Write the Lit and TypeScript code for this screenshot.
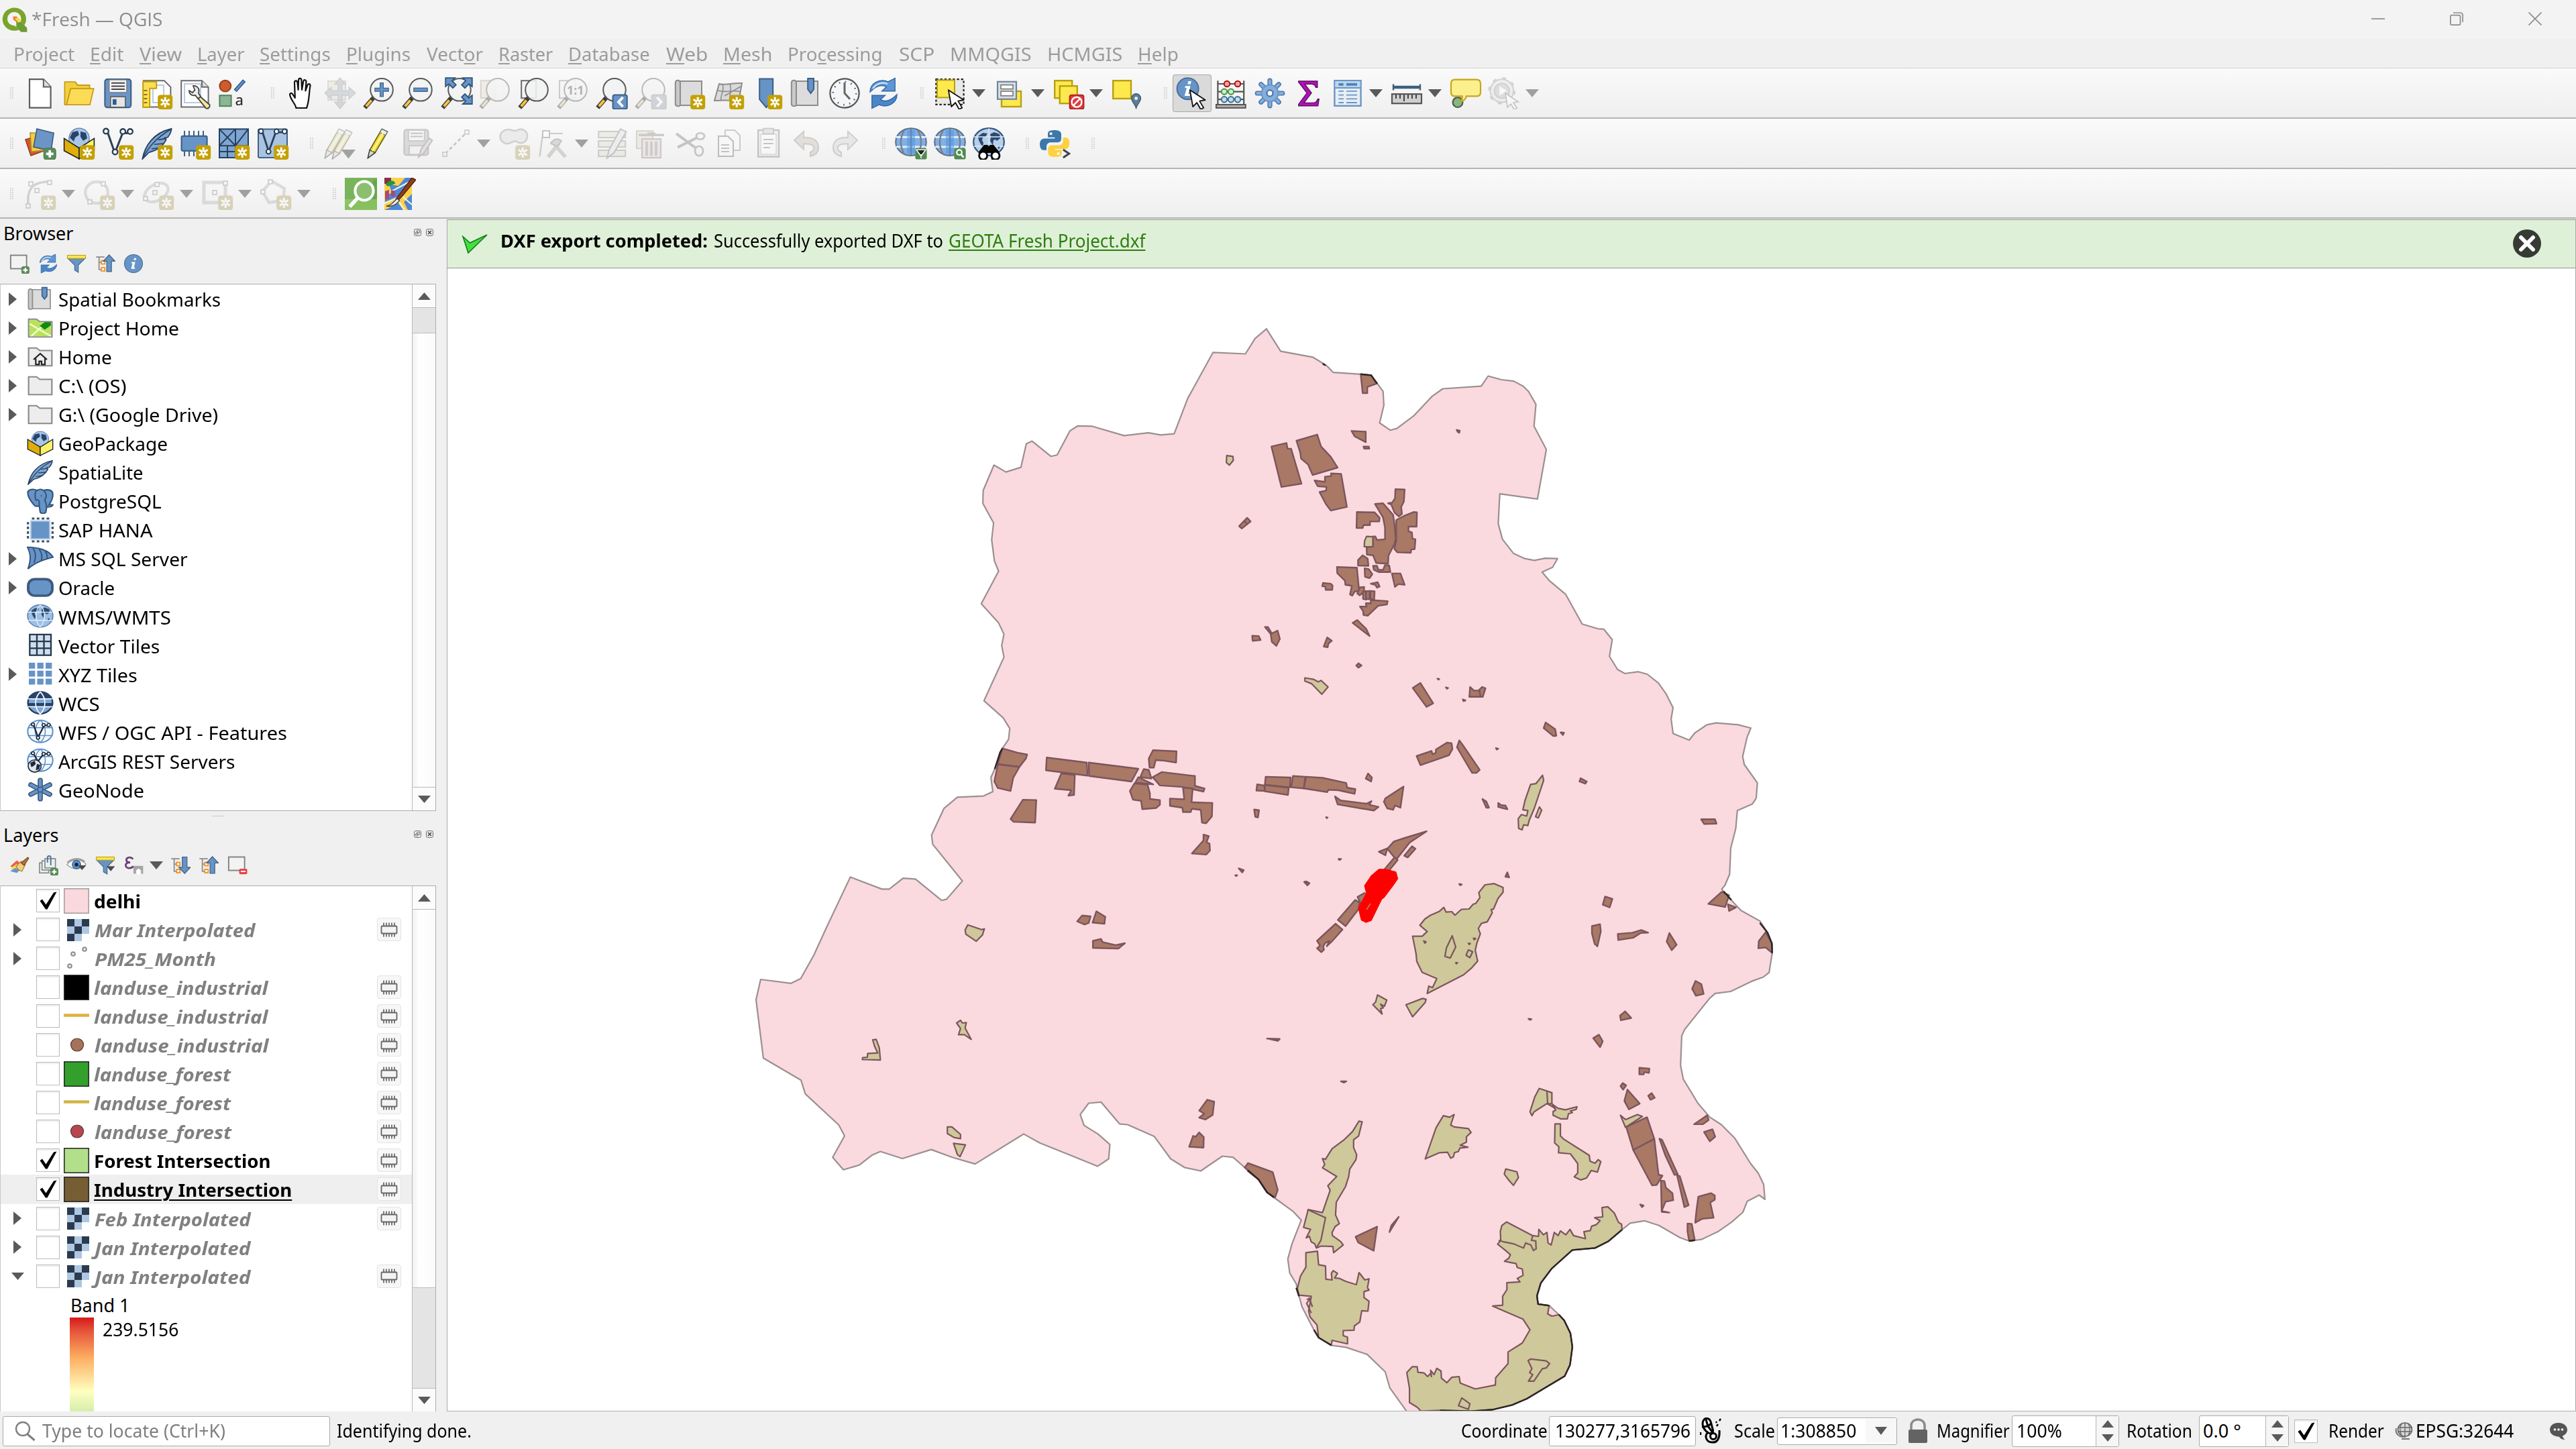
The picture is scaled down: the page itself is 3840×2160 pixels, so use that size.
import { LitElement, html, svg, css, nothing } from "lit";
import { customElement, property } from "lit/decorators.js";
import { styleMap } from "lit/directives/style-map.js";

/* ---------- shared icon parts (24 x 24 grid) ---------- */
const star = svg`<rect x="12.6" y="13.2" width="11" height="10.8" rx="2" fill="#c4a000"/><path d="M18.1 14.9v7.6M14.9 16.6l6.4 4.2M21.3 16.6l-6.4 4.2" stroke="#fff" stroke-width="1.5"/><circle cx="18.1" cy="18.7" r="1.5" fill="#fff"/><circle cx="18.1" cy="18.7" r=".7" fill="#c4a000"/>`;
const plusBadge = svg`<rect x="14.6" y="15.4" width="9" height="8.6" rx="2" fill="#5a8c5a" stroke="#457545" stroke-width=".5"/><path d="M19.1 17v5.4M16.4 19.7h5.4" stroke="#fff" stroke-width="1.8"/>`;
const lens = (inner: unknown = nothing) => svg`<path d="M1.4 22.8l6.6-7.6" stroke="#3c3c3c" stroke-width="3.2"/><path d="M2.4 21.7l3.900-4.500" stroke="#fcc33c" stroke-width="1.9"/><circle cx="14" cy="9.400" r="8.400" fill="#f1f3f3" fill-opacity=".88" stroke="#5a5a5a" stroke-width="1"/>${inner}`;
const pointer = svg`<path d="M10.400 9.600l11.400 7.400-4.200.8 3 5-2.200 1.200-2.800-5-3 3z" fill="#fff" stroke="#111" stroke-width=".9" stroke-linejoin="round"/>`;
const pencil = svg`<path d="M4.200 22.800l1.400-6L14.600 1.200l4.200 2L9.600 18.800z" fill="#f2dd3b" stroke="#6b6410" stroke-width=".9" stroke-linejoin="round"/><path d="M5.600 16.800l4 2-5.400 4z" fill="#d8d8d8" stroke="#444" stroke-width=".7"/><path d="M14.600 1.200l4.200 2-1.500 2.600-4.200-2z" fill="#eee" stroke="#777" stroke-width=".6"/><path d="M7.600 17.600l8-13.400" stroke="#fff6a0" stroke-width="1.100"/>`;
const globeBase = svg`<ellipse cx="12" cy="10.800" rx="11.400" ry="10.200" fill="#7fb0e6" stroke="#5a6f88" stroke-width="1"/><path d="M1 7.200h22M1 14.400h22" stroke="#e9f1fa" stroke-width="1.400"/><path d="M7 2c-3.400 6-3.400 12 0 18M17 2c3.400 6 3.400 12 0 18M12 .8v20" stroke="#7a7f86" stroke-width="1.200" fill="none"/><path d="M9 2.200h6v17.200H9z" fill="#4c91e0" opacity=".5"/>`;
const continents = svg`<path d="M4 6.500l3.500-2.500 3.500.5-1.500 2.500-2 .5-.5 2 1 2-.6 3-1.700-2.500-1.200-2.500zM13 5l3-1.500 4 1.500.6 3-2.600 2-1-1-1.500.5-.5 4-2-3.500.5-3zM18.500 14l2-.5-1 3z" fill="#2c4a70"/>`;
const folder = svg`<path d="M1.600 3.600h7l3 2.400h10.800v14.400H1.600z" fill="#ededed" stroke="#8a8a8a" stroke-width="1.300"/>`;
const refresh = svg`<path d="M2 11C2 4.600 9 .8 15.400 3.400L20.600.8v9.600H10.800l3.400-3.200C10.200 5 6 7 2 11z" fill="#5f97d4" stroke="#2f66a8" stroke-width=".7"/><path d="M22 13c0 6.400-7 10.200-13.400 7.600L3.400 23.200v-9.600h9.800l-3.400 3.200C13.800 19 18 17 22 13z" fill="#4b86c8" stroke="#2f66a8" stroke-width=".7"/><path d="M4 8.600C7 4.600 11 3.600 15 5" stroke="#cfe2f6" stroke-width="1.100" fill="none"/>`;
const info = svg`<circle cx="12" cy="12" r="10.800" fill="#6794c6" stroke="#4a7099" stroke-width=".9"/><path d="M12.800 5.300h2.400l-.5 2.400h-2.400zM9.800 10h4.300l-1.700 6.600h1.500l-.4 1.600H9.200l1.700-6.600H9.400z" fill="#fff"/>`;
const treeLines = svg`<path d="M1 4h10M4.500 4v15.500M4.500 10.500H9M4.500 19H9" stroke="#8a8a8a" stroke-width="1.400" fill="none"/><rect x="7.400" y="8.400" width="4" height="4" fill="#fff" stroke="#f39324" stroke-width="1.500"/><rect x="7.400" y="16.800" width="4" height="4" fill="#fff" stroke="#f39324" stroke-width="1.500"/>`;
const funnel = svg`<path d="M1.500 5.500h21l-8.300 8.300v8.600l-4.400-2.600v-6z" fill="#6794c6" stroke="#41678f" stroke-width=".9"/><rect x="1.200" y="2" width="21.600" height="3.800" fill="#fbe64a" stroke="#b79f12" stroke-width=".8"/>`;
const scroll = svg`<path d="M5 3h16v18H5z" fill="#dcdcdc" stroke="#8d8d8d"/><path d="M1.400 4.500C1.400 1.600 5 1.600 5 4.500V20.500c0 1.600-3.600 1.600-3.600-.6z" fill="#c9c9c9" stroke="#8d8d8d"/>`;
const quill = svg`<path d="M1.200 23.400C3 14 9 4 22.800 1c-.2 3-1.600 4.800-2.800 6.400l-2.200.4 1 1.400c-2.600 5.200-7 8-12.800 9.400z" fill="#7ea5d3" stroke="#26405f" stroke-width=".9"/><path d="M1.200 23.400C6 14 12 7.400 22 1.600M8 16l6-1M10 12.600l7-.6M13 9.200l6-1" stroke="#26405f" stroke-width=".8" fill="none"/>`;
const vnet = svg`<path d="M4.200 3.600L9.600 19 15.400 4.200h4" stroke="#2c4056" stroke-width="1.500" fill="none"/><g fill="#fff" stroke="#2c4056" stroke-width="1.200"><circle cx="3" cy="2.800" r="1.900"/><circle cx="9.800" cy="18.200" r="1.900"/><circle cx="15.600" cy="3" r="1.900"/><circle cx="21" cy="3" r="1.900"/></g>`;
const box = svg`<circle cx="12" cy="8.200" r="7.600" fill="#a9c6e8" stroke="#5a7da6" stroke-width=".6"/><path d="M7 3.500l4-1 1 3-3 2-1 3-3-3zM13 3l4 1 1 4-3 2-2-3z" fill="#27456b"/><path d="M.8 8.200L12 15.400v8L.8 17.400z" fill="#dfae08" stroke="#222" stroke-width=".8"/><path d="M23.200 8.200L12 15.400v8l11.200-6z" fill="#fdf36a" stroke="#222" stroke-width=".8"/>`;
const node = (x: number, y: number) => svg`<rect x=${x - 1.5} y=${y - 1.5} width="3" height="3" fill="#f4f4f4" stroke="#8a9296" stroke-width=".9"/>`;

const ICONS: Record<string, unknown> = {
  qgis: svg`<path fill-rule="evenodd" d="M11.500 1a10.500 10.800 0 1 0 0 21.600c1.700 0 3-.3 4.400-1L12 17.800c-4 0-6.600-2.600-6.600-6.200C5.400 7.800 8 5 11.500 5s6.200 2.800 6.200 6.600c0 .9-.1 1.600-.4 2.400l3.400 3.200c1-1.600 1.500-3.600 1.500-5.600C22.200 5.500 17.500 1 11.500 1z" fill="#7aa52c"/><path d="M10.600 9.200h3l2.600 2.600v3l-2 .2-3.600-3z" fill="#f0782a"/><path d="M13.400 13l2.600-1 7 8v3.800h-5.400l-4.200-4.600z" fill="#6f9b35"/><path d="M12 11l3-1 3 4-3 1z" fill="#f6d64a"/>`,
  newdoc: svg`<path d="M4 1.600h10.400l5.400 5.600V22.800H4z" fill="#fff" stroke="#5d5d5d" stroke-width="1.100"/><path d="M14.400 1.600v5.600h5.400" fill="#ddd" stroke="#5d5d5d"/>`,
  open: svg`<path d="M1.200 3.600h8l1.600 2.400h9v3H6L3 20.600H1.200z" fill="#f2cf3d" stroke="#c89b16" stroke-width=".9"/><path d="M5.600 8.600H22.800L20 20.600H2.600z" fill="#fcdc56" stroke="#c89b16" stroke-width=".9"/>`,
  save: svg`<rect x="2.200" y="1.600" width="19.400" height="21" rx="1.800" fill="#6c95c5" stroke="#3f6289" stroke-width="1.100"/><rect x="5.400" y="2" width="13" height="9.400" fill="#f4f4f4" stroke="#777" stroke-width=".6"/><path d="M7 4.400h10M7 6.700h10M7 9h10" stroke="#444" stroke-width="1"/><rect x="6.400" y="14.600" width="11" height="7.800" fill="#e5e5e5" stroke="#555" stroke-width=".7"/><rect x="8" y="16.400" width="2.800" height="4.200" fill="#2e5b94"/>`,
  layout: svg`<path d="M2 2.600h15.400l4.800 4.800v14.800H2z" fill="#fff" stroke="#6b6b6b"/><path d="M9 6h8v13H9z" fill="none" stroke="#b9cbe6"/><path d="M1.600 3.400h10v5h-5v14h-5z" fill="#fbdf58" stroke="#c4a000"/><path d="M2.200 10h2.500M2.200 13h2.500M2.200 16h2.500M2.200 19h2.500" stroke="#8d7608"/>${star}`,
  wrench: svg`<path d="M1.600 2.600H17l4.800 4.800v14.800H1.600z" fill="#fff" stroke="#6b6b6b"/><path d="M17 2.600v4.800h4.800" fill="#ddd" stroke="#6b6b6b"/><path d="M4 5h12v14H4z" fill="none" stroke="#b9cbe6"/><path d="M14 13l8.800 7.600c.3 2-1.200 3.200-2.800 2.600L13 14.500z" fill="#f4e39c" stroke="#444" stroke-width=".9"/><path d="M10.500 6.500c2.600-.2 4.600 1.600 4.300 4l-.3 1.500 1.600 2.500-2 1.500-2-2.500c-2.600.6-4.600-.8-4.600-3.400l2.600 1.400 1.600-2z" fill="#ececec" stroke="#444" stroke-width=".9"/>`,
  style: svg`<circle cx="5.400" cy="6.600" r="4.200" fill="#cf5a2c" stroke="#96401e"/><path d="M12.800 10.200l6.800-7.600" stroke="#2e5a94" stroke-width="2.800"/><path d="M13.200 9.800l6-6.800" stroke="#6c95c5" stroke-width="1.200"/><rect x="1.200" y="13.600" width="8.600" height="8" fill="#8bb594" stroke="#4f8658"/><text x="12.800" y="21" font-size="11" font-family="Noto Sans" fill="#222">a</text>`,
  hand: svg`<path d="M8.200 23c-.4-3-3.800-5.600-4.600-9.600-.4-1.600 1.400-2 2.200-.4l1.600 2.400L7 4c0-1.800 2-1.800 2.200 0l.6 5.400.2-7.200c.2-1.800 2.200-1.600 2.200.2l.3 7 1.100-6.200c.4-1.700 2.200-1.300 2.100.4l-.5 6.600 1.500-4.200c.6-1.500 2.300-.9 2 .7-1 5.300-.6 11.300-2.700 16.300z" fill="#fff" stroke="#111" stroke-width="1.100" stroke-linejoin="round"/>`,
  panto: svg`<rect x="3" y="3" width="13" height="14" fill="#e9dfae" stroke="#bbb08a"/><path d="M12 .6l4 4.600h-2.600v5H18.600V7.600l4.800 4.200-4.800 4.400v-2.600h-5.200v5H16l-4 4.800-4-4.800h2.600v-5H5.400v2.600L.6 11.800l4.800-4.200v2.600h5.200v-5H8z" fill="#9aaec0" stroke="#8896a3" stroke-width=".8"/>`,
  zoomin: lens(svg`<path d="M14 4v10.800M8.600 9.400h10.800" stroke="#3f6289" stroke-width="3"/><path d="M14 4.600v9.600M9.200 9.400h9.600" stroke="#6794c6" stroke-width="1.800"/>`),
  zoomout: lens(svg`<path d="M8.600 9.400h10.800" stroke="#3f6289" stroke-width="3.200"/><path d="M9.200 9.400h9.600" stroke="#6794c6" stroke-width="1.900"/>`),
  zoomfull: svg`${lens()}<g fill="#6794c6" stroke="#2f537c" stroke-width=".9"><path d="M3.600.6h7L8.400 2.700l3 3-2.400 2.400-3-3L3.600 7z"/><path d="M23.400.6h-7l2.200 2.100-3 3 2.400 2.400 3-3 2.400 1.900z"/><path d="M23.400 20h-7l2.200-2.100-3-3 2.400-2.400 3 3 2.400-1.900z"/></g>`,
  zoomsel: svg`<rect x="1.400" y="2.600" width="11" height="13" fill="#e9dfae" stroke="#aaa177"/>${lens()}`,
  zoomlayer: svg`<rect x="2.600" y="2.600" width="11" height="13" fill="#f4f4f4" stroke="#6b6b6b"/>${lens()}`,
  zoomone: svg`<rect x="2" y="2.600" width="12" height="13" fill="#f4f4f4" stroke="#888"/>${lens(svg`<text x="7.500" y="13" font-size="9" font-weight="700" font-family="Noto Sans" fill="#444">1:1</text>`)}`,
  zoomlast: svg`${lens()}<rect x="12.800" y="13.200" width="10.600" height="10.600" rx="1.400" fill="#6794c6" stroke="#3b5f8a"/><path d="M20.300 15l-3.300 3.500 3.300 3.500" stroke="#fff" stroke-width="1.900" fill="none"/>`,
  zoomnext: svg`${lens()}<rect x="12.800" y="13.200" width="10.600" height="10.600" rx="1.400" fill="#8ea4ba" stroke="#8294a6"/><path d="M16.600 15l3.300 3.500-3.300 3.500" stroke="#fff" stroke-width="1.900" fill="none"/>`,
  newmap: svg`${scroll}${star}`,
  map3d: svg`<path d="M5 5c5 1.500 10-1 17-.5L19.500 18.500c-6-2-12-1-18-1z" fill="#dadada" stroke="#8d8d8d"/><path d="M7.500 5.500c2 4-2 8-1 12M13 5c2 5-1 9 0 12.500M4 10c6 2 12-1 17 1M9 14l12-7" stroke="#8d8d8d" fill="none" stroke-width=".8"/>${star}`,
  newbook: svg`<path d="M6.600 1.200h10v15.400l-5 6-5-6z" fill="#6794c6" stroke="#3b5f8a"/>${star}`,
  book: svg`${scroll}<path d="M13.600 1h4.400v8l-2.200 3-2.200-3z" fill="#6794c6" stroke="#3b5f8a"/>`,
  clock: svg`<circle cx="12" cy="12" r="10.800" fill="#f6f6f6" stroke="#555" stroke-width="1.100"/><circle cx="12" cy="12" r="8.600" fill="none" stroke="#44729f" stroke-width="1.300" stroke-dasharray=".9 3.603"/><path d="M12 4v8l4 4.400" stroke="#666" stroke-width="1.500" fill="none"/>`,
  refresh,
  select: svg`<rect x="1.200" y="1.600" width="20.600" height="18.800" fill="#e8e8e8" stroke="#222" stroke-width="1.100" stroke-dasharray="1.700 1.400"/><rect x="2" y="2.200" width="13" height="13" fill="#fde84e" stroke="#b8a012"/>${pointer}`,
  selform: svg`<rect x="6" y="10.500" width="14.500" height="11.500" fill="#fde84e" stroke="#b8a012" stroke-width="1.200"/><rect x="3" y="3.400" width="14" height="13" fill="#d9dee3" stroke="#71869c" stroke-width="1.100"/><rect x="5.500" y="5.800" width="9" height="3" fill="#fff" stroke="#777" stroke-width=".8"/><rect x="5.500" y="10.500" width="9" height="3.400" fill="#fff" stroke="#777" stroke-width=".8"/>`,
  deselect: svg`<rect x="1.600" y="2.600" width="13" height="13" fill="#fde84e" stroke="#b8a012" stroke-width="1.200"/><rect x="5.400" y="6.600" width="13" height="13" fill="#fde84e" stroke="#b8a012" stroke-width="1.200"/><rect x="12.800" y="13.400" width="10.400" height="10.400" rx="1.400" fill="#dd3f3f" stroke="#b82020"/><circle cx="18" cy="18.600" r="3.700" fill="none" stroke="#fff" stroke-width="1.200"/><path d="M15.600 21l4.800-4.800" stroke="#fff" stroke-width="1.200"/>`,
  selloc: svg`<rect x="1.600" y="2.600" width="13.400" height="13.400" fill="#fde84e" stroke="#b8a012" stroke-width="1.200"/><path d="M18.800 23c-.8-3-3.400-4.600-3.400-7.200a3.400 3.400 0 0 1 6.800 0c0 2.600-2.600 4.200-3.400 7.200z" fill="#5f7f96" stroke="#3e5a6e" stroke-width=".7"/><circle cx="18.800" cy="15.800" r="1.200" fill="#fff"/>`,
  identify: svg`<circle cx="8.800" cy="8.600" r="8" fill="#6794c6" stroke="#4a7099"/><path d="M9.200 3h2.200l-.5 2.200H8.700zM7 6.600h3.800l-1.600 6h1.400l-.3 1.400H6.400l1.600-6H6.600z" fill="#fff"/>${pointer}`,
  abacus: svg`<path d="M2.200 2.600v19M21.600 2.600v19M2 5h19.800M2 10.800h19.800M2 16.600h19.800" stroke="#555" stroke-width="1.100"/><g stroke-width="1"><g fill="#f9a0a0" stroke="#a11"><circle cx="9" cy="5" r="2.100"/><circle cx="17" cy="5" r="2.100"/></g><g fill="#c4f3c0" stroke="#4b9150"><circle cx="7" cy="10.800" r="2.100"/><circle cx="12" cy="10.800" r="2.100"/></g><g fill="#bfdcf2" stroke="#3f6f92"><circle cx="7" cy="16.600" r="2.100"/><circle cx="12" cy="16.600" r="2.100"/><circle cx="17" cy="16.600" r="2.100"/></g></g><rect x=".9" y="20.400" width="22" height="2.600" fill="#aaa" stroke="#444" stroke-width=".8"/>`,
  gear: svg`<g stroke="#4b79ad" stroke-width="3.600" stroke-linecap="round"><path d="M12 2.600v18.800M2.600 12h18.800M5.400 5.400l13.200 13.200M18.600 5.400L5.400 18.600"/></g><g stroke="#86aedd" stroke-width="2" stroke-linecap="round"><path d="M12 2.600v18.800M2.600 12h18.800M5.400 5.400l13.200 13.200M18.600 5.400L5.400 18.600"/></g><circle cx="12" cy="12" r="6.200" fill="#86aedd" stroke="#6a95c8"/><circle cx="12" cy="12" r="2.300" fill="#fff" stroke="#4b79ad" stroke-width="1.200"/>`,
  sigma: svg`<path d="M4.400 3h14v4.600h-1.200c-.6-2-1.400-2.400-3.600-2.400H9l5 6.600-5.600 7.400h6.200c2.400 0 3.200-.6 4-2.800h1l-.8 5H4.400v-1.200l6.200-8.400-6.200-8z" fill="#b012b0" stroke="#5d0c66" stroke-width=".7"/>`,
  table: svg`<rect x="2.200" y="2.600" width="19.600" height="18.800" fill="#e6eef5" stroke="#6c95c5" stroke-width="1.200"/><rect x="2.800" y="3.200" width="18.400" height="4.400" fill="#b5d8f0"/><path d="M2 8h20" stroke="#6c95c5"/><path d="M5.200 5.400h3.600M11 5.400h8" stroke="#5581b3" stroke-width="1.900"/><path d="M5.200 10.400H9M11 10.400h8M5.200 13.300H9M11 13.300h8M5.200 16.200H9M11 16.200h8M5.200 19H9M11 19h8" stroke="#6c95c5" stroke-width=".9"/>`,
  measure: svg`<path d="M2 5.200v4.600M22 5.200v4.600" stroke="#3f5f7c" stroke-width="1.200"/><path d="M2 7.500h20" stroke="#3f5f7c" stroke-width="2.200"/><rect x="1" y="12.600" width="22" height="7" fill="#cfcfcf" stroke="#555" stroke-width="1.100"/><path d="M4 13v3M7 13v3M10 13v5M13 13v3M16 13v3M19 13v3" stroke="#444" stroke-width="1"/>`,
  tip: svg`<circle cx="6" cy="18.800" r="3.700" fill="#84b784" stroke="#4b5b4b" stroke-width="1.100"/><path d="M4 1.800h16c2 0 3 1 3 3v6.400c0 2-1 3-3 3h-7.600c-.4 2-1.600 3.400-4 4.200.8-1.400 1.200-2.600 1-4.200H4c-2 0-3-1-3-3V4.800c0-2 1-3 3-3z" fill="#fcf08e" stroke="#c4a71a" stroke-width="1.100"/>`,
  run: svg`<circle cx="10.400" cy="10.200" r="8.600" fill="#e3e3e3" stroke="#9a9a9a" stroke-width="1"/><circle cx="10.400" cy="10.200" r="9.300" fill="none" stroke="#9a9a9a" stroke-width="1.800" stroke-dasharray="3 4.300"/><circle cx="10.400" cy="10.200" r="5.600" fill="#b5b9bd" stroke="#999"/><path d="M8.600 6.800l5.600 3.400-5.600 3.400z" fill="#fff"/><path d="M13 12l9.600 6.400-3.600.6 2.600 4-2 1.200-2.400-4.200-2.600 2.400z" fill="#fff" stroke="#777" stroke-width=".8"/>`,
  datasrc: svg`<path d="M1 9l10-3 3.500 11.500-9.500 3.500z" fill="#d4572c" stroke="#96401e" stroke-width=".8"/><path d="M4.500 4l11 .5V17l-10 1z" fill="#f7cf3a" stroke="#b0902a" stroke-width=".8"/><path d="M9.500 1l12.500 3.200-2 13.300L7 14.500z" fill="#6c95c5" stroke="#3f6289" stroke-width=".9"/>${plusBadge}`,
  geopkg: svg`${box}${star}`,
  shape: svg`${vnet}${star}`,
  quill: svg`${quill}${star}`,
  memory: svg`<path d="M4 2.500v19M7.500 2.500v19M11 2.500v19M14.500 2.500v19M18 2.500v19" stroke="#3f6289" stroke-width="1"/><rect x="1.800" y="6.400" width="19" height="11" rx="1" fill="#6794c6" stroke="#3f6289" stroke-width="1.100"/>${star}`,
  mesh: svg`<rect x="1" y="1.200" width="21.500" height="21.300" fill="#7fa6d3" stroke="#26405f"/><path d="M1 13.600h21.500M13 1v21.500M1 1.200l12 12.400M13 1.200L1 13.600M22.500 1.200L13 13.600M1 18h12M7 13.600v9" stroke="#26405f" stroke-width="1" fill="none"/>${star}`,
  virtual: svg`<rect x="1" y="1.200" width="21.500" height="21.300" rx="1" fill="#a9c4e2" stroke="#3f6289"/><path d="M4 3l4.800 15L14 3.600h5" stroke="#2c4056" stroke-width="1.400" fill="none"/><g fill="#fff" stroke="#2c4056"><circle cx="3" cy="2.800" r="1.700"/><circle cx="8.600" cy="18" r="1.700"/><circle cx="14.600" cy="3" r="1.700"/><circle cx="20.600" cy="3" r="1.700"/></g>${star}`,
  multiedit: svg`<g transform="translate(-3 0)">${pencil}</g><g transform="translate(2.500 .6)">${pencil}</g><path d="M14.400 17h8.600l-4.300 5.400z" fill="#222" stroke="#222"/>`,
  pencil,
  saveedit: svg`<rect x="2.200" y="1.600" width="18" height="19" rx="1.800" fill="#a9b0b8" stroke="#777"/><rect x="5.400" y="2" width="12" height="8" fill="#f4f4f4" stroke="#888"/><path d="M7 4.400h9M7 6.700h9" stroke="#777"/><rect x="6" y="13.600" width="10" height="6.600" fill="#eee" stroke="#888"/><path d="M13 22l2-6 6-8 2.200 1.600L17 19z" fill="#d9bcbc" stroke="#8a6c6c"/>`,
  line: svg`<path d="M4 19.500L19.500 4" stroke="#777" stroke-width="1.300" stroke-dasharray="2.600 1.800"/>${node(3.5, 20)}${node(20, 3.5)}`,
  blob: svg`<path d="M5 2c4-2 6 2 9 0 4-2 8 1 7.500 5C21 11 17 13 13.500 10.500 11 9 9 13 5.500 12 0 10 0 4 5 2z" fill="#d6dbd6" stroke="#8a9a8a" stroke-width="1.300"/>${star}`,
  vertex: svg`<path d="M4 5L1.800 21.500M5 4.500h14" stroke="#888" stroke-width="1.100"/><rect x="4" y="2.500" width="5" height="5" fill="#fff" stroke="#777"/><path d="M8 22l8-10M21 22l-8-9" stroke="#a9a07a" stroke-width="2.800"/><path d="M10 12c2-4 6-4 8-2l-3 4z" fill="#aaa" stroke="#777"/>`,
  form: svg`<g fill="#e2dcb8" stroke="#908c72"><rect x="1.600" y="3" width="20" height="4.600"/><rect x="1.600" y="10" width="20" height="4.600"/><rect x="1.600" y="17" width="20" height="4.600"/></g><path d="M8 22.800l1.400-6L18 1.200l4.200 2-9 15.600z" fill="#e2e2e2" stroke="#777"/>`,
  trash: svg`<rect x="1" y="2.600" width="12" height="13" fill="#e2dcb8" stroke="#aaa177"/><path d="M5 8.600h14v14H5z" fill="#e4cccc" stroke="#a37f7f" stroke-width="1.100"/><path d="M2.600 5.600h18.800M8.500 10.500v10.500M12 10.500v10.500M15.500 10.500v10.500M9 4.600h6" stroke="#a37f7f" stroke-width="1.700"/>`,
  cut: svg`<path d="M1.600 4.600l14 10.400M2.600 14.800L17 7.600" stroke="#777" stroke-width="2"/><ellipse cx="19.500" cy="6.500" rx="3" ry="2.400" fill="none" stroke="#777" stroke-width="1.300"/><ellipse cx="18.500" cy="17.500" rx="3" ry="3.600" fill="none" stroke="#777" stroke-width="1.300"/>`,
  copy: svg`<path d="M9 2h7l4 4v11H9z" fill="#fbfbfb" stroke="#888"/><path d="M4 6.500h7l4 4V21.500H4z" fill="#fbfbfb" stroke="#666"/><path d="M6 13h6M6 15.500h6M6 18h6" stroke="#777"/>`,
  paste: svg`<rect x="4.600" y="2" width="15.400" height="19.800" fill="#e9e9e9" stroke="#777" stroke-width="1.200"/><rect x="6.600" y="5" width="11.400" height="15" fill="#fff" stroke="#999" stroke-width=".6"/><rect x="8.400" y=".8" width="7.600" height="4" fill="#ccc" stroke="#888"/><path d="M8.500 9h7.500M8.500 12h7.500M8.500 15h5" stroke="#777"/>`,
  undo: svg`<path d="M3 9.500l7-6.500v4.500c8-.5 11 3 11 7.500 0 3-2 5.500-6 6.500v-3c2-.6 2.600-2 2.600-3.200 0-2-2-3.300-7.600-3v4z" fill="#d3b79a" stroke="#a08a78"/>`,
  redo: svg`<path d="M21 9.500L14 3v4.500C6 7 3 10.500 3 15c0 3 2 5.500 6 6.500v-3c-2-.6-2.600-2-2.600-3.200 0-2 2-3.300 7.600-3v4z" fill="#cdd4cd" stroke="#8a948a"/>`,
  metaget: svg`${globeBase}<rect x="15.200" y="15.400" width="8.600" height="8.400" rx="1.600" fill="#4f8a4f"/><path d="M16 16.600h7l-3.500 4.800zM19.500 20v3" fill="#222" stroke="#eee" stroke-width=".8"/>`,
  metasearch: svg`${globeBase}<rect x="15.200" y="15.400" width="8.600" height="8.400" rx="1.600" fill="#4f8a4f"/><circle cx="19" cy="18.600" r="1.900" fill="none" stroke="#fff" stroke-width="1.100"/><path d="M20.300 20l1.900 2.300" stroke="#fff" stroke-width="1.300"/>`,
  binoc: svg`<ellipse cx="12" cy="10.800" rx="11.400" ry="10.200" fill="#b7d0ea" stroke="#34557c" stroke-width="1.100"/>${continents}<path d="M1 7h22M1 14h22M12 .6v12" stroke="#dce8f5" stroke-width=".8"/><path d="M8.400 13h2.600l1 1 1-1h2.600l4 5v4h-3v2H14l-.4-5h-3.200L10 24H7v-2H4.600v-4z" fill="#050505"/><circle cx="7.800" cy="21" r="3" fill="#fff" stroke="#050505" stroke-width="1.400"/><circle cx="17" cy="21" r="3" fill="#fff" stroke="#050505" stroke-width="1.400"/>`,
  python: svg`<path d="M12 2c-4.600 0-5 1.500-5 3v2.400h5.200v.8H4.400C2.200 8.200 1 10 1 12.600s1.200 4.300 3 4.300h2v-2.700c0-1.800 1.400-3.100 3.200-3.100h5.300c1.500 0 2.500-1.200 2.500-2.600V5c0-2-2-3-5-3z" fill="#3c78aa"/><circle cx="9.300" cy="4.600" r="1" fill="#fff"/><path d="M12.300 22c4.600 0 5-1.500 5-3v-2.200h-5.200V16h7.700c2.200 0 3.300-1.700 3.300-4.300S22 7.500 20 7.500h-1.700v2.700c0 1.800-1.400 3.100-3.200 3.100H9.800c-1.500 0-2.600 1.200-2.600 2.600V19c0 2 2 3 5.100 3z" fill="#ffd140"/><circle cx="14.800" cy="19.500" r="1" fill="#fff"/><path d="M18.400 16.500l4.400 3-4.400 3" stroke="#444" stroke-width="1.500" fill="none"/>`,
  curve: svg`<path d="M3 20C2 10 5 3 18 3" stroke="#999" stroke-width="1.800" fill="none"/>${node(3, 21)}${node(9.5, 9.5)}${node(19, 3.5)}${node(5, 4.5)}${star}`,
  circ: svg`<ellipse cx="10" cy="11" rx="8.400" ry="8" fill="none" stroke="#aab5b0" stroke-width="2.200"/>${node(15, 4.5)}${node(5, 18)}${star}`,
  ellipse: svg`<ellipse cx="10.500" cy="11" rx="9.500" ry="6" fill="none" stroke="#aab5b0" stroke-width="2.200" transform="rotate(-30 10.500 11)"/>${node(9.5, 11)}${node(11, 5)}${node(2.5, 15.5)}${star}`,
  rect: svg`<rect x="2" y="3.500" width="16" height="15" fill="none" stroke="#aab5b0" stroke-width="2.600"/>${node(10, 11)}${node(18, 4)}${star}`,
  poly: svg`<path d="M9 2.500l9.500 5.500-1 9L7 18.500 2 10z" fill="none" stroke="#aab5b0" stroke-width="2.200"/>${node(8, 3)}${node(2.5, 10.5)}${star}`,
  qms: svg`<rect width="24" height="24" fill="#66a74c"/><path d="M0 0h24L0 22z" fill="#79b45c"/><path d="M0 16h24v8H0z" fill="#9cd06c" opacity=".6"/><ellipse cx="14.500" cy="9.700" rx="6.800" ry="7" fill="#8abf70" stroke="#fff" stroke-width="2"/><path d="M9.500 15.200L3.600 21.600" stroke="#fff" stroke-width="2.800"/>`,
  qmap: svg`<rect x=".5" width="20.500" height="24" fill="#fbd24a"/><path d="M4 5l7 1L16 0h5v4l-8 6-3 5-9 3v-4l5-3zM.5 24c5-2 8-4 9-7l5 7zM21 12v12h-3l-3-6z" fill="#4e86d8"/><path d="M6 10l15-8M.5 19l9-4 6 9M14 14l7 6" stroke="#f4f2e4" stroke-width="1" fill="none"/><path d="M.5 0h5v4.500h-5z" fill="#8e2c4b"/><path d="M1.500 5c2-3.500 7-3.500 7-.5L3 6.500z" fill="#1f9b3c"/><path d="M1 10l3-1v7H1zM5.500 9.500h2.800V14H5.500z" fill="#a84a72"/><path d="M9 16L21 0l3 1.500L13.500 14l-3 3z" fill="#8e3f18" stroke="#55240c" stroke-width=".7"/><path d="M2 21c3 0 5-2.500 8-5.500l1.800 1.500C9 20.500 6 22 2 21z" fill="#f0f0f0" stroke="#444" stroke-width=".7"/>`,
  /* dock panel icons */
  addlayer: svg`<rect x="1.500" y="2" width="19" height="16" fill="#f3f3f3" stroke="#7d837d" stroke-width="1.500"/>${plusBadge}`,
  removelayer: svg`<rect x="1.500" y="2" width="19" height="16" fill="#f3f3f3" stroke="#7d837d" stroke-width="1.500"/><rect x="14" y="16" width="9.600" height="6.500" rx="1.600" fill="#e8424a"/><path d="M16 19.200h5.600" stroke="#fff" stroke-width="1.500"/>`,
  funnel,
  funneldrop: svg`${funnel}<path d="M13.500 13h10l-5 6z" fill="#4a4a4a"/>`,
  collapse: svg`${treeLines}<path d="M16.500 1.600l7 7.400h-4.200v12.400h-5.600V9H9.500z" fill="#6794c6" stroke="#3f6289"/>`,
  expand: svg`${treeLines}<path d="M17 21.600l7-7.400h-4.200V2h-5.600v12.200H10z" fill="#6794c6" stroke="#3f6289"/>`,
  info,
  brush: svg`<path d="M1 13l8-7 6 5-6 6z" fill="#f25c4d"/><path d="M1 16l8-6 4 5-5 4z" fill="#f9dc55"/><path d="M1 19l6-4 5 3-3 3z" fill="#5f97d4"/><path d="M8 13l6-6 5 4-4 8c-4-1-6-3-7-6z" fill="#f1cf7e" stroke="#aa8136"/><path d="M14 9l8-6.500 1 1L17.500 12z" fill="#b9773c" stroke="#784617"/>`,
  addgroup: svg`<g fill="#eee" stroke="#7d8a8a" stroke-width="1.300"><rect x="1.500" y="9" width="11" height="12"/><rect x="4.500" y="6.500" width="12" height="11"/><rect x="8" y="4" width="12.500" height="11"/></g><path d="M11 8.500V3c0-3 4-3 4 0v9" fill="none" stroke="#4b719c" stroke-width="1.500"/>${plusBadge}`,
  eye: svg`<path d="M.6 11C7 4 16 3.500 23.400 10.500 16 18.500 7 17 .6 11z" fill="#fff" stroke="#999"/><circle cx="12" cy="11" r="5" fill="#5f97d4" stroke="#2f537c"/><circle cx="12" cy="11" r="2.300" fill="#14263c"/><path d="M1 8.500C8 2.500 16 3 22 7.500" stroke="#8d8d8d" stroke-width="1.300" fill="none"/><path d="M14 12h9.600l-5 5.500z" fill="#4a4a4a"/>`,
  epsilon: svg`<path d="M11.500 4.500c-3-3.500-8.500-2-8 1.500.3 2 2.500 2.700 4.500 2.500-3.500 0-5.500 1.300-5.300 3.700.3 3.800 6.500 4 9.300.8" stroke="#6c3f78" stroke-width="2.200" fill="none"/><path d="M12 14.500h12l-4 4.500v4h-4v-4z" fill="#fff"/><path d="M12 12.500h11.500V22h-2.500v-4l-3-2.500-3 2.500v4h-3z" fill="#a5a5a5"/>`,
  /* browser tree icons */
  pfolder: svg`${folder}<path d="M2.300 4.400h6.200l3 2.300h10.200v13H2.300z" fill="#b9e25c"/><path d="M2.500 8l8 5 11 6.500M4 19.500L17 7.500" stroke="#f7ffd8" stroke-width="1.400" fill="none"/><path d="M11.500 10l4.500-3.500h5.500v3L16 13.500z" fill="#128a12"/>`,
  home: svg`${folder}<path d="M6 14.500L12 9l6 5.500M8 13.500v5.700h3v-3h2.200v3h3v-5.700" fill="none" stroke="#222" stroke-width="1.300"/>`,
  folder,
  box,
  feather: quill,
  elephant: svg`<path d="M1 3c2-2.600 6-2.400 8-1 2-1.400 4.500-1.400 6 0 3-1.200 7-.8 8 2 .8 3.600-1.200 8.500-3.200 11.500h3.400c-.4 1.800-3.400 2.400-5.400 1.700l-.8 5.300c-1.400 1.600-4 1.400-5 0l-1-6.600c-1.400 1.500-3.600 1.300-4.600-.4C3.500 12 .2 7 1 3z" fill="#6794c6" stroke="#33557d" stroke-width="1.300"/><path d="M8.500 2c-2 3-1 7-.5 9 2.500-1 3.500.5 3 4.500M15 2c3 3 3 6 1 9 .8 2 1.600 4 1.500 6M13 6.500v1" stroke="#33557d" stroke-width="1.200" fill="none"/>`,
  hana: svg`<rect x="3.500" y="3.500" width="17" height="17" fill="#6794c6" stroke="#b9d0ea" stroke-width="1.200"/><path d="M4.500 1.200h15.500M4.500 22.800h15.500" stroke="#3d4f66" stroke-width="1.900" stroke-dasharray="2.300 2.100"/><path d="M1 4.500v15.500M23 4.500v15.500" stroke="#3d4f66" stroke-width="1.900" stroke-dasharray="2.300 2.100"/>`,
  mssql: svg`<path d="M.5 1C10 1 20 4 23.500 10.500 16 12.500 8 15 1 21.500 3.500 14 4 8 .5 1z" fill="#6794c6" stroke="#33557d" stroke-width="1.200"/><path d="M5.500 1.800c3 5 2.600 9 1 14M11 3c3 4 2.800 7.500 2 11M16.500 5c2 3 2 5 1.600 7.500" stroke="#33557d" stroke-width="1.200" fill="none"/>`,
  oracle: svg`<rect x="1.200" y="4" width="21.600" height="15.600" rx="6" fill="#6794c6" stroke="#3d5a80" stroke-width="2.300"/>`,
  wms: svg`<ellipse cx="12" cy="11.500" rx="11.300" ry="10.500" fill="#9dc0e6" stroke="#5f86b4"/>${continents}<path d="M1 8h22M1 15.500h22M12 1c-5 6-5 15 0 21M12 1c5 6 5 15 0 21" stroke="#e8f1fa" stroke-width=".8" fill="none"/>`,
  vtiles: svg`<rect x="2.600" y="1.800" width="19" height="19.500" fill="#cfdeee" stroke="#26384e" stroke-width="1.400"/><path d="M2.600 8.300h19M2.600 14.800h19M9 1.800v19.500M15.300 1.800v19.500" stroke="#26384e" stroke-width="1.400"/>`,
  xyz: svg`<g fill="#6794c6">${[0, 1, 2].map((r) => [0, 1, 2].map((c) => svg`<rect x=${1.8 + c * 7.5} y=${1.2 + r * 7.5} width="5.600" height="5.600"/>`))}</g>`,
  wcs: svg`<ellipse cx="12" cy="11.800" rx="11" ry="10.300" fill="#7fa8d8" stroke="#24405f" stroke-width="1.500"/><path d="M2 7.600h20v-2l-4-3-6-1-6 1-4 3zM1.500 12h21v3.400h-21z" fill="#27436b"/><path d="M1 8h22M1 15.500h22M12 1.500c-5.500 6-5.500 15 0 21M12 1.500c5.500 6 5.500 15 0 21" stroke="#fff" stroke-width="1" fill="none"/>`,
  wfs: svg`<ellipse cx="12" cy="11.500" rx="11.200" ry="10.500" fill="#f4f9ff" stroke="#5b8fc8" stroke-width="1.200"/><path d="M1 8h22M1 15.500h22M12 1c-6 6-6 15 0 21M12 1c6 6 6 15 0 21" stroke="#5b8fc8" stroke-width=".9" fill="none"/><path d="M6 5.500l4 11.500 5.500-11h4" stroke="#1d2a3a" stroke-width="1.400" fill="none"/><g fill="#fff" stroke="#1d2a3a"><circle cx="5.500" cy="5" r="1.400"/><circle cx="10" cy="17.500" r="1.400"/><circle cx="15" cy="5.500" r="1.400"/><circle cx="19.500" cy="5.500" r="1.400"/></g>`,
  arcgis: svg`<ellipse cx="12" cy="11.500" rx="11.200" ry="10.500" fill="#f4f9ff" stroke="#5b8fc8" stroke-width="1.200"/><path d="M1 8h22M1 15.500h22M12 1c-6 6-6 15 0 21M12 1c6 6 6 15 0 21" stroke="#5b8fc8" stroke-width=".9" fill="none"/><path d="M6 5.500l4 7 5-7h4.500" stroke="#1d2a3a" stroke-width="1.300" fill="none"/><g fill="#fff" stroke="#1d2a3a"><circle cx="5.500" cy="5" r="1.400"/><circle cx="15" cy="5.500" r="1.400"/><circle cx="19.500" cy="5.500" r="1.400"/></g><circle cx="7" cy="17" r="5.800" fill="#dfe5ec" stroke="#1d2a3a"/><path d="M3 14l4-2 1 3-2 2-2 1zM9 15l3 1-1 4-3 1z" fill="#1d2a3a"/>`,
  geonode: svg`<g stroke="#33557d" stroke-width="4.600" stroke-linecap="round"><path d="M12 3.200v17.600M3.600 7.500l16.800 9M20.400 7.500l-16.800 9"/></g><g stroke="#6794c6" stroke-width="2.700" stroke-linecap="round"><path d="M12 3.200v17.600M3.600 7.500l16.800 9M20.400 7.500l-16.800 9"/></g><circle cx="12" cy="12" r="2.400" fill="#6794c6" stroke="#33557d"/>`,
};

/* Text run scaled horizontally to a nominal width; "&" marks the mnemonic letter. */
@customElement("qg-text")
class QgText extends LitElement {
  @property() text = "";
  @property({ type: Number }) w = 0;
  static styles = css`
    :host { display: inline-block; white-space: pre; flex: none; }
    span { display: inline-block; transform-origin: 0 50%; text-decoration: inherit; }
    u { text-decoration-thickness: 2px; text-underline-offset: 3px; }
  `;
  updated() {
    if (!this.w) return;
    const span = this.renderRoot.querySelector("span")!;
    span.style.transform = `scaleX(${(this.w / span.offsetWidth).toFixed(4)})`;
    this.style.width = `${this.w}px`;
  }
  render() {
    const i = this.text.indexOf("&");
    return i < 0
      ? html`<span>${this.text}</span>`
      : html`<span>${this.text.slice(0, i)}<u>${this.text[i + 1]}</u>${this.text.slice(i + 2)}</span>`;
  }
}

const icon = (name: string, cls = "") =>
  html`<svg class="ic ${cls}" viewBox="0 0 24 24" preserveAspectRatio="none">${ICONS[name]}</svg>`;

/* toolbar scripts: "name" button, "-name" disabled, "v"/"-v" drop arrow, "|n" grip cell n px wide, "*name" pressed */
const BARS = [
  "|42 newdoc open save layout wrench style |42 hand -panto zoomin zoomout zoomfull -zoomsel zoomlayer -zoomone zoomlast -zoomnext newmap map3d newbook book clock refresh |42 select v selform v deselect v selloc |39 *identify abacus gear sigma table v measure v tip |0 -run -v",
  "|42 datasrc geopkg shape quill memory mesh virtual |41 -multiedit pencil -saveedit -line -v -blob -vertex -v -form -trash -cut -copy -paste -undo -redo |40 metaget metasearch binoc |40 python |42",
  "|42 -curve -v -circ -v -ellipse -v -rect -v -poly -v |39 qms qmap",
];

const MENU: [string, number][] = [
  ["Pro&ject", 91], ["&Edit", 50], ["&View", 63], ["&Layer", 70], ["&Settings", 106], ["&Plugins", 96], ["Vect&or", 84],
  ["&Raster", 81], ["&Database", 122], ["&Web", 62], ["&Mesh", 73], ["Pro&cessing", 142], ["SCP", 53], ["MMQGIS", 122], ["HCMGIS", 112], ["&Help", 61],
];

const TREE: [string, string, number, number?][] = [
  ["book", "Spatial Bookmarks", 242, 1], ["pfolder", "Project Home", 180, 1], ["home", "Home", 80, 1], ["folder", "C:\\ (OS)", 101, 1],
  ["folder", "G:\\ (Google Drive)", 238, 1], ["box", "GeoPackage", 163], ["feather", "SpatiaLite", 127], ["elephant", "PostgreSQL", 154],
  ["hana", "SAP HANA", 140], ["mssql", "MS SQL Server", 193, 1], ["oracle", "Oracle", 84, 1], ["wms", "WMS/WMTS", 168],
  ["vtiles", "Vector Tiles", 151], ["xyz", "XYZ Tiles", 118, 1], ["wcs", "WCS", 62], ["wfs", "WFS / OGC API - Features", 341],
  ["arcgis", "ArcGIS REST Servers", 263], ["geonode", "GeoNode", 128],
];

type Layer = { n: string; w: number; k: string; c?: string; on?: boolean; arrow?: "r" | "d"; mem?: boolean; sel?: boolean };
const LAYERS: Layer[] = [
  { n: "delhi", w: 70, k: "fill", c: "#f9d9de", on: true },
  { n: "Mar Interpolated", w: 239, k: "raster", arrow: "r", mem: true },
  { n: "PM25_Month", w: 181, k: "points", arrow: "r" },
  { n: "landuse_industrial", w: 260, k: "fill", c: "#000000", mem: true },
  { n: "landuse_industrial", w: 260, k: "line", c: "#dfb03c", mem: true },
  { n: "landuse_industrial", w: 260, k: "dot", c: "#a5735a", mem: true },
  { n: "landuse_forest", w: 204, k: "fill", c: "#33a02c", mem: true },
  { n: "landuse_forest", w: 204, k: "line", c: "#d2b347", mem: true },
  { n: "landuse_forest", w: 204, k: "dot", c: "#b6474d", mem: true },
  { n: "Forest Intersection", w: 263, k: "fill", c: "#b2df8a", on: true, mem: true },
  { n: "Industry Intersection", w: 295, k: "fill", c: "#765d34", on: true, mem: true, sel: true },
  { n: "Feb Interpolated", w: 233, k: "raster", arrow: "r", mem: true },
  { n: "Jan Interpolated", w: 233, k: "raster", arrow: "r" },
  { n: "Jan Interpolated", w: 233, k: "raster", arrow: "d", mem: true },
];

const SHEETS: Record<string, [number, number, number]> = {
  A: [1100, 470, 1.8447], B: [1800, 470, 1.8447], C: [1100, 1200, 1.7231], D: [1860, 1200, 1.7231],
};
const pts = (sheet: string, raw: string) => {
  const [ox, oy, sy] = SHEETS[sheet];
  return raw.trim().split(/\s+/).map((p) => {
    const [x, y] = p.split(",").map(Number);
    return `${(ox + x / 1.7422).toFixed(1)},${(oy + y / sy).toFixed(1)}`;
  }).join(" ");
};

const OUTLINE = [
  pts("B", "153,37 190,99 273,115 300,132 312,141 326,157 398,162 425,165 441,188 456,209 458,247 447,296 475,316 492,311 535,277 583,223 611,202 711,195 729,167 763,177 795,181 820,195 834,210 853,245 848,305 880,369 857,505 759,491 755,573 766,616 795,655 824,669 849,674 877,668 909,669 896,693 869,706 888,730 930,767 973,849 1014,862 1029,863 1051,892 1044,938 1065,974 1084,985 1118,980 1142,987 1171,1011 1191,1041 1209,1079 1204,1110 1209,1150 1251,1168 1266,1148 1297,1126 1321,1121 1378,1126 1411,1135 1401,1161 1390,1213 1394,1235 1428,1286 1425,1328 1415,1344 1376,1362 1372,1411 1359,1465 1356,1537 1344,1567"),
  pts("D", "1231,216 1240,228 1281,271 1330,298 1350,328 1361,355 1362,380 1354,430 1339,442 1308,453 1254,479 1214,484 1200,496 1135,576 1127,593 1124,669 1131,704 1169,766 1200,802 1230,821 1265,856 1306,921 1326,946 1340,975 1343,1013 1328,1002 1297,1018 1286,1046 1257,1071 1221,1096 1178,1116 1147,1120 1122,1111 1068,1080 1030,1068 993,1074 972,1091 936,1121 902,1138 843,1143 789,1191 761,1228 751,1261 754,1282 783,1286 808,1309 822,1324 838,1357 843,1392 837,1438 823,1467 725,1525 687,1541 636,1553 580,1557 500,1555 480,1580 430,1580 413,1558 369,1497 357,1456 310,1411 255,1393 217,1388 184,1368 170,1345 141,1289 129,1245 126,1230 109,1202 104,1166 115,1127 139,1066 118,1044 68,1008 50,995 28,962 0,938"),
  pts("C", "1316,931 1286,905 1258,902 1202,940 1160,931 1124,909 1081,851 1012,821 991,819 943,763 911,766 889,795 899,823 935,845 966,872 963,909 934,928 860,898 784,868 742,845 616,922 557,905 502,885 427,908 370,890 349,899 315,925 274,937 246,905 277,850 262,822 175,742 164,707 66,650 47,500 59,448 138,458 163,446 197,386 230,315 292,185 374,216 393,216 429,188 461,190 529,245 542,242 583,195 506,101 503,77 535,9"),
  pts("A", "570,1325 638,1322 662,1310 657,1271 667,1248 681,1202 687,1191 703,1166 706,1136 689,1107 639,1060 691,940 685,908 691,877 677,846 632,793 677,704 666,675 659,617 664,571 636,517 637,482 665,412 696,431 735,418 749,353 764,346 813,388 829,384 862,318 883,304 919,305 1003,331 1066,323 1098,329 1133,326 1168,229 1234,102 1318,106 1343,64 1373,37"),
].join(" ");

const INDUSTRY: [string, string][] = [
  ["B", "398,162 425,165 439,188 415,197 415,214 403,214"], ["B", "374,318 411,320 411,349 382,333"], ["B", "405,361 419,361 420,367 407,367"], ["B", "647,315 655,317 654,323 650,321"],
  ["B", "166,361 205,351 208,367 217,367 244,463 192,472"], ["B", "231,345 285,328 295,361 320,389 338,419 273,439 261,410 243,394 241,378"],
  ["B", "278,454 305,458 305,444 321,442 321,435 347,436 362,527 320,537 308,520 291,486 308,482 309,472 286,470"],
  ["B", "103,557 112,567 89,586 82,580"], ["B", "96,566 103,574"],
  ["B", "488,478 512,479 510,512 503,527 505,546 497,553 486,543 477,520 469,517 480,515 487,503"],
  ["B", "388,541 434,542 447,557 446,567 422,567 422,577 405,577 403,585 387,585"],
  ["B", "435,519 456,517 482,549 485,570 489,615 485,630 470,661 469,683 438,681 430,660 414,658 413,638 430,636 430,608 436,608 440,618 461,616 461,584 456,556"],
  ["B", "490,563 510,552 535,541 544,542 543,581 522,581 522,594 531,597 532,614 540,616 538,643 529,644 528,653 493,652 485,642 490,620"],
  ["B", "403,660 416,669 418,689 391,688 391,673"], ["B", "336,692 388,694 394,760 383,759 376,771 370,768 375,744 358,741 357,730 337,709"],
  ["B", "300,736 320,738 325,743 324,755 307,755 306,746 298,745"], ["B", "408,696 419,698 428,712 421,723 409,719"], ["B", "430,689 440,689 444,700 456,700 461,687 472,688 475,706 444,706 432,700"],
  ["B", "479,710 501,710 512,741 496,739 487,747"], ["B", "424,738 442,734 447,746 440,749 436,742"], ["B", "396,748 407,747 406,762 395,770 389,765"],
  ["B", "404,760 411,758 412,782 404,780"], ["B", "412,759 421,758 421,781 412,780"], ["B", "423,758 434,759 433,781 423,781"],
  ["B", "396,801 413,801 411,792 424,792 424,783 468,786 466,795 443,799 416,826 405,824 404,813"],
  ["B", "377,846 389,838 412,862 421,882"], ["B", "116,881 133,882 138,893 117,895"], ["B", "149,857 157,857 167,875 182,867 188,890 179,909 167,898 164,876"],
  ["B", "311,886 323,895 314,903 312,913 302,911"], ["B", "392,957 400,963 392,969 386,963"], ["B", "533,1025 553,1011 586,1067 569,1077"],
  ["B", "682,1022 692,1032 704,1032 713,1022 722,1026 715,1049 680,1049"], ["B", "706,1030 709,1049"],
  ["B", "878,1120 903,1138 906,1156 898,1157 873,1135"], ["B", "917,1147 926,1148 923,1154"], ["B", "543,1212 582,1198 584,1207 593,1203 593,1194 622,1175 634,1177 636,1193 627,1210 553,1237"],
  ["B", "654,1169 663,1182 707,1250 699,1258 687,1258 648,1188"], ["B", "749,1190 755,1192 751,1194"], ["B", "597,999 602,1000 600,1002"], ["B", "619,1023 625,1025 622,1027"], ["B", "663,1056 670,1059 665,1061"],
  ["B", "151,1269 216,1271 214,1298 149,1291"], ["B", "129,1290 147,1293 149,1308 127,1307"], ["B", "149,1292 211,1299 209,1319 149,1309"],
  ["B", "222,1267 254,1269 250,1301 217,1298"], ["B", "256,1269 299,1272 360,1286 363,1299 384,1303 382,1316 340,1306 314,1305 311,1311 250,1301"],
  ["B", "417,1260 427,1271 425,1282 411,1274"], ["B", "331,1323 346,1334 413,1343 426,1336 420,1346 444,1352 432,1362 338,1345"],
  ["B", "509,1296 501,1354 487,1348 482,1360 467,1356 458,1338 462,1328"], ["B", "121,1359 134,1361 131,1381 124,1379"], ["B", "308,1380 312,1381 310,1383"],
  ["B", "714,1330 724,1337 731,1354 724,1354"], ["B", "755,1341 763,1347 774,1348 779,1358 769,1356 755,1352"], ["B", "969,1273 985,1282 981,1288 966,1282"], ["B", "1282,1386 1318,1386 1322,1398 1290,1399"],
  ["B", "569,1419 525,1450 490,1497 467,1467 484,1447 513,1437"], ["B", "445,1475 467,1466 462,1485"], ["B", "531,1460 540,1467 520,1491 511,1486"], ["B", "486,1490 494,1498 469,1530 459,1524"],
  ["B", "340,1495 347,1495 343,1498"], ["B", "81,1521 94,1526 90,1532"], ["B", "72,1540 77,1540 75,1542"], ["B", "251,1558 258,1557 264,1563 259,1567"],
  ["A", "687,1191 727,1203 751,1208 748,1219 731,1242 675,1234"], ["A", "675,1235 731,1242 715,1272 708,1308 675,1300 666,1282"],
  ["A", "802,1216 906,1230 908,1266 800,1251"], ["A", "911,1230 1040,1247 1022,1282 912,1267"], ["A", "840,1260 875,1264 873,1319 858,1321 866,1306 823,1302"],
  ["A", "740,1332 775,1333 772,1395 716,1393 708,1385"], ["A", "1078,1196 1139,1199 1138,1230 1109,1225 1085,1223 1080,1244 1069,1244 1067,1219"],
  ["A", "1054,1248 1067,1250 1074,1274 1045,1270"], ["A", "1040,1270 1079,1290 1032,1285"], ["A", "1077,1270 1101,1256 1187,1267 1187,1294 1212,1301 1209,1310 1155,1297 1096,1293"],
  ["A", "1030,1287 1064,1291 1070,1315 1070,1330 1096,1333 1096,1346 1086,1355 1050,1358 1047,1335 1026,1332 1018,1308"],
  ["A", "1156,1299 1181,1301 1178,1339 1232,1341 1231,1378 1216,1397 1205,1395 1202,1360 1179,1357 1176,1366 1156,1366 1154,1354 1122,1349 1122,1329 1159,1331"],
  ["A", "1209,1428 1223,1432 1217,1449 1225,1453 1226,1472 1216,1483 1179,1480 1209,1444"],
  ["D", "285,236 303,226 312,232 294,255"], ["D", "279,244 290,250 288,267 254,311 234,295"], ["D", "228,305 246,320 218,351 205,363 212,349 202,354 196,363 198,372 191,378 180,368 188,361 180,349"],
  ["D", "148,197 160,200 155,206"], ["D", "549,203 556,204 552,206"], ["D", "674,173 679,186 669,184"], ["D", "928,235 947,241 940,263 922,256"], ["D", "894,311 915,306 917,325 908,363 901,357 894,330"],
  ["D", "961,331 999,328 1022,321 1040,328 1020,329 1001,341 962,347"], ["D", "1095,329 1114,359 1101,373 1088,351"], ["D", "1231,223 1250,232 1240,262 1196,254"], ["D", "1247,255 1268,263 1250,272"],
  ["D", "1345,327 1361,355 1362,380 1345,366 1326,368 1327,350"], ["D", "1163,452 1178,460 1184,485 1164,490 1154,472"], ["D", "980,530 996,547 969,553 967,541"], ["D", "912,590 922,607 915,622 897,599"],
  ["D", "1017,675 1043,677 1042,688 1030,686 1028,692 1017,692"], ["D", "974,714 983,720 975,731 968,722"], ["D", "986,731 1018,767 990,782 978,760"], ["D", "1049,740 1057,752 1046,757 1040,747"],
  ["D", "729,549 737,550 733,552"], ["D", "242,710 256,710 250,713"], ["D", "50,600 83,601 78,606"], ["D", "983,827 1037,802 1056,858 1001,886"], ["D", "1001,886 1056,858 1067,950 1077,952 1062,976 1050,977"],
  ["D", "1069,857 1076,860 1094,899 1117,949 1108,950 1084,899"], ["D", "1115,951 1122,953 1145,1028 1134,1033"], ["D", "1073,965 1082,966 1086,983 1103,997 1105,1015 1085,1019 1075,1043 1095,1047 1075,1045"],
  ["D", "1170,1006 1203,997 1213,1003 1213,1014 1201,1021 1210,1060 1180,1063 1162,1073 1165,1044"], ["D", "1142,1075 1153,1076 1161,1118 1146,1119 1142,1095"], ["D", "1193,797 1197,809 1182,820 1159,820"],
  ["D", "1185,840 1207,833 1214,852 1200,864"], ["D", "1019,1026 1028,1029 1024,1033"], ["D", "280,1109 336,1083 327,1145 287,1124"], ["D", "392,1058 368,1097 373,1080"], ["D", "0,920 64,943 77,987 70,1006 50,995 28,962 0,940"],
  ["C", "881,299 894,284 916,286 911,303 900,307"], ["C", "931,273 954,287 952,305 921,302"], ["C", "922,349 943,344 947,352 981,360 1005,355 988,369 922,367"],
  ["C", "1198,785 1219,757 1237,762 1233,796 1214,808 1198,803 1211,793"], ["C", "1182,850 1189,852 1198,841 1210,853 1209,880 1172,878"], ["C", "1316,931 1325,920 1389,943 1402,989 1395,1008 1375,995 1353,962"],
];

const FOREST: [string, string][] = [
  ["B", "50,386 66,388 67,399 57,412 49,405"], ["B", "413,608 430,609 430,637 407,636 408,620"], ["B", "253,997 275,1001 288,1008 295,1004 313,1022 297,1042 270,1013 253,1006"],
  ["B", "870,1265 873,1279 849,1355 835,1390 832,1403 821,1401 817,1415 808,1411 807,1384 815,1373 829,1377 832,1362 819,1360 825,1333 839,1290 853,1288"], ["B", "862,1352 868,1361 859,1382 852,1379"],
  ["C", "597,308 633,320 640,318 635,334 619,350 592,332 590,321"], ["C", "568,560 578,553 583,560 593,559 590,573 606,602 588,590 573,590 578,574"],
  ["C", "350,603 359,602 367,623 370,655 323,654 324,649 336,648 337,638 363,637 355,620"], ["C", "544,827 556,827 578,846 578,857 561,854 544,844"], ["C", "560,869 591,873 577,903 570,898"],
  ["D", "616,205 640,202 663,212 663,224 650,240 638,268 632,268 635,277 622,300 607,304 599,317 604,331 595,355 591,373 597,401 580,420 561,436 466,484 470,465 480,469 491,446 453,430 439,402 437,381 428,337 453,337 466,325 447,309 460,293 473,284 498,273 509,263 515,275 530,274 538,283 555,268 575,267 585,255 592,253 603,238 600,225"],
  ["D", "531,336 540,365 526,393 512,389 516,367"], ["D", "573,372 584,377 577,392 567,386"], ["D", "586,342 592,343 588,346"], ["D", "573,355 578,356 575,358"], ["D", "540,405 545,405 542,408"], ["D", "457,349 463,352 460,355"],
  ["D", "337,488 361,501 355,517 345,512 352,521 345,523 349,537 325,513 332,506"], ["D", "463,499 461,507 428,544 411,513 454,497"],
  ["D", "289,812 297,814 288,850 275,860 275,880 283,899 281,911 265,935 262,955 254,980 230,1020 228,1053 238,1075 227,1083 219,1098 220,1106 242,1122 248,1130 223,1150 221,1134 190,1133 178,1138 174,1127 165,1122 160,1108 152,1112 163,1090 145,1085 157,1039 194,1047 214,990 208,978 231,954 194,932 200,924 194,908 202,910 219,883 249,861 272,839"],
  ["D", "151,1150 181,1146 184,1181 202,1184 203,1218 219,1220 217,1203 222,1196 233,1203 226,1215 238,1216 255,1224 282,1232 289,1201 304,1220 315,1217 311,1240 315,1246 302,1250 302,1265 315,1275 312,1300 296,1299 291,1328 277,1338 276,1349 248,1350 248,1363 259,1367 259,1384 219,1375 217,1387 184,1368 180,1336 162,1315 158,1300 165,1262 133,1259 129,1242 137,1210 151,1187"],
  ["D", "508,798 524,802 536,795 527,822 536,827 573,831 580,841 568,852 568,866 552,874 572,879 551,881 547,890 537,893 534,904 527,907 519,892 498,893 461,909 489,829"],
  ["D", "757,728 790,739 790,768 777,767 744,788 738,798 733,788 745,751"], ["D", "790,768 806,779 825,783 855,775 853,782 838,786 843,790 833,793 830,806 812,806 793,797 793,787 800,784"],
  ["D", "798,819 812,819 812,850 820,858 887,900 889,915 902,920 910,911 917,916 908,943 892,939 880,958 865,963 848,955 857,945 857,921 838,896 807,893 808,878 797,868"],
  ["D", "670,935 699,942 703,957 690,977 679,965 666,948"], ["D", "968,797 981,808 1012,795 1025,800 981,828"],
  ["D", "413,1458 427,1443 440,1443 442,1457 458,1459 467,1468 475,1460 477,1468 475,1452 484,1463 491,1447 502,1454 503,1472 517,1484 530,1470 549,1468 552,1485 591,1500 643,1490 644,1471 676,1435 676,1405 713,1382 733,1348 715,1321 636,1287 662,1285 662,1262 673,1245 673,1227 707,1225 700,1216 715,1208 713,1192 700,1188 697,1178 677,1174 667,1172 678,1164 682,1155 668,1143 649,1128 657,1118 656,1095 660,1080 672,1071 740,1106 755,1108 756,1090 768,1104 777,1098 780,1125 788,1130 796,1098 806,1106 812,1094 826,1104 837,1090 846,1106 877,1114 873,1096 890,1093 893,1082 905,1078 915,1068 901,1060 922,1058 920,1034 935,1032 952,1048 963,1072 971,1077 972,1091 936,1121 902,1138 843,1143 789,1191 761,1228 751,1261 754,1282 783,1286 779,1307 790,1313 808,1309 822,1324 838,1357 843,1392 837,1438 823,1467 725,1525 687,1541 636,1553 580,1557 500,1555 450,1557 440,1547 420,1535 420,1498"],
  ["D", "728,1427 735,1423 775,1428 784,1435 775,1446 765,1448 743,1480 729,1480 740,1463 732,1458 738,1448"], ["D", "556,1523 577,1538 573,1552 547,1543"],
];
const SEAMS: [string, string][] = [
  ["D", "155,1039 202,1060 190,1118 178,1138"], ["D", "652,1118 664,1122 690,1127 716,1138 722,1125 735,1130 742,1144 749,1140 748,1120 737,1118 740,1106"], ["D", "777,735 779,768 800,780"],
  ["D", "153,1270 162,1268 153,1280 165,1305"], ["D", "159,1265 168,1289"],
];
const CUTS: [string, string][] = [
  ["B", "299,133 307,138"], ["B", "398,162 425,165 441,188"], ["A", "687,1191 681,1202 667,1248"], ["D", "0,938 28,962 50,995 68,1008"], ["D", "126,1240 133,1262"], ["D", "172,1348 184,1368 217,1388"],
  ["D", "1236,222 1256,244"], ["D", "1330,303 1350,328 1361,355 1362,380"], ["D", "972,1091 936,1121 902,1138 843,1143 789,1191 761,1228 751,1261 754,1282 783,1286"],
  ["D", "808,1309 822,1324 838,1357 843,1392 837,1438 823,1467 725,1525 687,1541 636,1553 580,1557 500,1555"], ["D", "1146,1120 1161,1118"],
];
const HIGHLIGHT = pts("D", "342,167 360,168 383,174 387,189 375,206 352,236 346,240 319,295 307,299 297,294 290,265 311,227 306,208 323,183");

const poly = (list: [string, string][], cls: string) => list.map(([s, p]) => svg`<polygon class=${cls} points=${pts(s, p)}></polygon>`);

@customElement("app-root")
class AppRoot extends LitElement {
  static styles = css`
    :host { display: flex; flex-direction: column; width: 3840px; height: 2160px; background: #f0f0f0; overflow: hidden;
      font-family: "Noto Sans", "Open Sans", sans-serif; font-size: 27px; line-height: 36px; color: #000; }
    * { box-sizing: border-box; }
    .row { display: flex; align-items: center; }
    svg { display: block; flex: none; }
    .title { height: 57px; background: #f3f3f3; padding: 0 51px 0 0; color: #8d8d8d; font-family: "Open Sans", sans-serif; }
    .title .logo { width: 40px; height: 38px; margin: 0 5px 0 2px; }
    .title .win { width: 20px; height: 20px; margin-left: 97px; margin-top: -2px; }
    .title .first { margin-left: auto; }
    .menu { height: 45px; background: #f0f0f0; border-bottom: 1px solid #d2d2d2; padding: 3px 0 0 20px; gap: 23.300px; color: #9c9c9c; }
    .bar { height: 75px; border-bottom: 2px solid #b4b4b4; background: linear-gradient(#fafafa, #efefef); padding-top: 1px; }
    .bar.last { height: 74px; }
    .bar .grip:first-child { margin-left: -11px; }
    .grip { height: 18px; padding-left: 26px; flex: none; overflow: hidden; }
    .grip svg { width: 5px; height: 18px; }
    .btn { width: 57.870px; height: 56px; padding: 4px 5px; flex: none; }
    .btn .ic { width: 48px; height: 48px; }
    .btn.on { background: #dadada; border: 1px solid #a9a9a9; border-radius: 3px; padding: 3px 4px; }
    .off { opacity: .38; filter: grayscale(.6); }
    .drop { width: 30px; padding-left: 3px; flex: none; }
    .drop svg { width: 20px; height: 12px; }
    .work { display: flex; flex: none; height: 1778px; }
    .dock { width: 666px; flex: none; display: flex; flex-direction: column; }
    .head { height: 44px; padding: 0 20px 0 5px; flex: none; }
    .head .mini { width: 11px; height: 11px; margin-left: 7px; margin-top: -4px; }
    .head .mini.a { margin-left: auto; }
    .tools { height: 45px; margin-bottom: 8px; padding-left: 14px; gap: 12.600px; flex: none; }
    .tools .ic { width: 30px; height: 30px; }
    .tools .drop { width: 20px; padding: 0; margin: 0 -2px 0 -4px; }
    .view { display: flex; width: 650px; border: 1px solid #adadad; border-left-color: #c9c9c9; background: #fff; flex: none; }
    .view.b { height: 786px; }
    .view.l { height: 784px; border-bottom: none; }
    .items { flex: 1; overflow: hidden; }
    .items qg-text { margin-top: 3px; }
    .item { height: 43.050px; }
    .item .exp { width: 40px; padding-left: 12px; flex: none; }
    .item .exp svg { width: 12px; height: 20px; }
    .item .pic { width: 40px; height: 38px; margin: 0 7px 0 -1px; }
    .sb { width: 35px; border-left: 1px solid #b9b9b9; display: flex; flex-direction: column; background: linear-gradient(90deg, #f1f1f1, #fff 30%, #fafafa); flex: none; }
    .sb .end { height: 35px; display: flex; align-items: center; justify-content: center; background: #fbfbfb; border-bottom: 1px solid #b9b9b9; flex: none; }
    .sb .end.dn { border-bottom: none; border-top: 1px solid #b9b9b9; }
    .sb .end svg { width: 19px; height: 11px; }
    .sb .thumb { background: #e4e4e4; flex: none; border-bottom: 1px solid #bdbdbd; }
    .sb .thumb.low { border-top: 1px solid #bdbdbd; border-bottom: none; }
    .sb .fill { flex: 1; }
    .split { height: 14px; display: flex; justify-content: center; align-items: center; width: 650px; flex: none; }
    .split svg { width: 18px; height: 3px; }
    .layer { height: 43.050px; font-weight: 700; padding-right: 16px; }
    .layer.dim { color: #808080; font-style: italic; }
    .layer.sel { background: #efefef; }
    .layer .exp { width: 53px; display: flex; justify-content: center; padding-right: 3px; flex: none; }
    .layer .exp svg { width: 12px; height: 20px; }
    .layer .exp svg.d { width: 19px; height: 11px; }
    .cb { width: 35px; height: 35px; border: 1px solid #bdbdbd; background: #fff; box-shadow: inset 0 2px 2px #ececec; flex: none; }
    .cb svg { width: 33px; height: 33px; }
    .sym { width: 38px; height: 38px; margin: 0 7px 0 6px; flex: none; }
    .sym.shift { margin-right: 8px; }
    .underline { text-decoration: underline; text-decoration-thickness: 2px; text-underline-offset: 4px; }
    .mem { width: 36px; height: 35px; border: 1px solid #e4e4e4; border-radius: 4px; background: #f7f7f7; display: flex; align-items: center; justify-content: center; margin-left: auto; flex: none; }
    .mem svg { width: 26px; height: 24px; }
    .band { height: 40px; padding: 1px 0 0 104px; }
    .ramp { display: flex; padding-left: 103px; gap: 13px; }
    .ramp qg-text { margin-top: 0; }
    .ramp .col { width: 36px; height: 150px; background: linear-gradient(#d7191c 0, #e6543a 20px, #fdae61 60px, #ffffc0 110px, #c9e8a4 150px); }
    .canvas { flex: 1; display: flex; flex-direction: column; border-left: 1px solid #a8a8a8; border-right: 1px solid #a8a8a8; border-bottom: 1px solid #b0b0b0; background: #fff; margin-top: 1px; min-width: 0; }
    .msg { height: 73px; background: #dff0d8; border: 1px solid #8a9a86; border-left: none; border-right: none; padding: 0 51px 6px 22px; flex: none; }
    .msg .tick { width: 38px; height: 30px; margin: 6px 19px 0 0; }
    .msg b { font-weight: 700; margin: -3px 9px 0 0; }
    .msg > qg-text { margin-top: -3px; }
    .msg .link { color: #2e7d0e; text-decoration: underline; text-decoration-thickness: 2px; text-underline-offset: 3px; margin-left: 8px; }
    .msg .x { width: 42px; height: 42px; margin: 4px 0 0 auto; }
    .map { width: 3172px; height: 1703px; }
    .region { fill: #fadade; stroke: #9b8f92; stroke-width: 2.200; stroke-linejoin: round; }
    .ind { fill: #a97966; stroke: #7c555d; stroke-width: 2.400; stroke-linejoin: round; }
    .for { fill: #cec89b; stroke: #7c555d; stroke-width: 2.200; stroke-linejoin: round; }
    .seam { fill: none; stroke: #7c555d; stroke-width: 2.200; }
    .cutl { fill: none; stroke: #2b2424; stroke-width: 2.400; }
    .hot { fill: #f00; stroke: #f00; stroke-width: 4; stroke-linejoin: round; }
    .status { height: 56px; padding-top: 2px; flex: none; }
    .field { height: 45px; border: 1px solid #ababab; border-radius: 3px; background: #fff; display: flex; align-items: center; flex: none; }
    .locate { width: 488px; margin: 0 10px 0 4px; padding-left: 17px; color: #7f7f7f; }
    .locate svg { width: 31px; height: 31px; margin-right: 10px; }
    .right { margin-left: auto; }
    .coord { width: 219px; margin: 0 6px 0 2px; padding-left: 8px; }
    .mouse { width: 34px; height: 40px; margin-right: 17px; }
    .scale { width: 179px; height: 41px; margin: 0 16px 0 3px; padding-left: 4px; }
    .scale .pad { margin-left: auto; width: 46px; height: 36px; background: #f7f7f7; display: flex; align-items: center; justify-content: center; }
    .scale .pad svg { width: 18px; height: 12px; }
    .lock { width: 30px; height: 38px; margin-right: 13px; }
    .mag { width: 160px; height: 47px; margin: 0 11px 0 3px; padding-left: 6px; }
    .rot { width: 134px; height: 47px; margin: 0 8px 0 10px; padding-left: 5px; }
    .spin { margin-left: auto; width: 34px; height: 100%; border-left: 1px solid #b5b5b5; background: #f6f6f6; display: flex; flex-direction: column; justify-content: center; align-items: center; gap: 10px; }
    .spin svg { width: 18px; height: 11px; }
    .ren { margin: 0 16px; }
    .crs { width: 28px; height: 26px; margin-right: 3px; }
    .chat { width: 28px; height: 27px; margin: 0 12px 0 53px; }
  `;

  private tri(dir: "r" | "d" | "u", cls = "", fill = "#5a5a5a") {
    const d = dir === "r" ? "M0 0L12 10 0 20z" : dir === "d" ? "M0 0H20L10 12z" : "M0 12H20L10 0z";
    return html`<svg class=${cls} viewBox=${dir === "r" ? "0 0 12 20" : "0 0 20 12"} preserveAspectRatio="none"><path d=${d} fill=${fill}/></svg>`;
  }

  private tool(tok: string) {
    if (tok[0] === "|") {
      return html`<div class="grip" style=${styleMap({ width: `${tok.slice(1)}px`, padding: tok === "|0" ? "0" : "" })}>
        <svg viewBox="0 0 5 18">${[0, 1, 2, 3, 4, 5].map((i) => svg`<path d="M0 ${i * 3 + 1}h1.500M3.200 ${i * 3 + 1}h1.500" stroke="#aaa" stroke-width="1.200"/>`)}</svg></div>`;
    }
    const off = tok[0] === "-";
    const on = tok[0] === "*";
    const name = off || on ? tok.slice(1) : tok;
    if (name === "v") return html`<div class="drop">${this.tri("d", "", off ? "#a0a0a0" : "#5a5a5a")}</div>`;
    return html`<div class="btn ${on ? "on" : ""}">${icon(name, off ? "off" : "")}</div>`;
  }

  private check() {
    return svg`<path d="M4.500 17l3.500-2.500 5.500 8L25 4.500l4.500-1L15.500 29.500H13z" fill="#000"/>`;
  }

  private symbol(l: Layer) {
    if (l.k === "fill") return svg`<rect x=".8" y=".8" width="36.400" height="36.400" fill=${l.c} stroke=${l.n === "delhi" ? "#a59a9c" : "#232323"} stroke-width="1.500"/>`;
    if (l.k === "line") return svg`<path d="M0 17.500h38" stroke=${l.c} stroke-width="4.500"/>`;
    if (l.k === "dot") return svg`<circle cx="20" cy="18.500" r="9.500" fill=${l.c} stroke="#5b3a32" stroke-width="1.200"/>`;
    if (l.k === "points") return svg`<g fill="#f4f4f4" stroke="#8c8c8c" stroke-width="2"><circle cx="9" cy="30" r="2.800"/><circle cx="14" cy="12" r="2.800"/><circle cx="31" cy="5" r="2.800"/></g>`;
    const cells = ["#2b3a4f", "#aec7e3", "#2b3a4f", "#aec7e3", "#2b3a4f", "#aec7e3", "#2b3a4f", "#aec7e3", ""];
    return cells.map((c, i) => (c ? svg`<rect x=${5 + (i % 3) * 11} y=${3 + Math.floor(i / 3) * 11} width="11" height="11" fill=${c}/>` : nothing));
  }

  private head(label: string, w: number) {
    return html`<div class="head row"><qg-text text=${label} .w=${w}></qg-text>
      <svg class="mini a" viewBox="0 0 11 11"><rect x=".6" y=".6" width="9.800" height="9.800" rx="2" fill="none" stroke="#6a6a6a"/><path d="M4.500 2.800h4v3h-4zM2.600 5h3.400v3H2.600z" fill="#efefef" stroke="#555" stroke-width=".8"/></svg>
      <svg class="mini" viewBox="0 0 11 11"><rect x=".6" y=".6" width="9.800" height="9.800" rx="2" fill="none" stroke="#6a6a6a"/><path d="M3 3l5 5M8 3L3 8" stroke="#444" stroke-width="1.600"/></svg></div>`;
  }

  private layerRow(l: Layer) {
    const shift = l.k === "raster" || l.k === "points" || l.k === "dot";
    return html`<div class="layer row ${l.on ? "" : "dim"} ${l.sel ? "sel" : ""}">
      <div class="exp">${l.arrow ? this.tri(l.arrow, l.arrow) : nothing}</div>
      <div class="cb">${l.on ? html`<svg viewBox="0 0 33 33">${this.check()}</svg>` : nothing}</div>
      <svg class="sym ${shift ? "shift" : ""}" viewBox="0 0 38 38">${this.symbol(l)}</svg>
      <qg-text class=${l.sel ? "underline" : ""} text=${l.n} .w=${l.w}></qg-text>
      ${l.mem ? html`<div class="mem"><svg viewBox="0 0 26 24"><path d="M5 1.500v21M9 1.500v21M13 1.500v21M17 1.500v21M21 1.500v21" stroke="#6e6e6e" stroke-width="1.800"/><rect x="1.500" y="6.500" width="23" height="11" rx="1" fill="#f4f4f4" stroke="#666" stroke-width="1.800"/></svg></div>` : nothing}
    </div>`;
  }

  render() {
    return html`
      <div class="title row">
        <svg class="logo" viewBox="0 0 24 24" preserveAspectRatio="none">${ICONS.qgis}</svg>
        <qg-text text="*Fresh — QGIS" .w=${195}></qg-text>
        <svg class="win first" viewBox="0 0 20 20"><path d="M0 10h20" stroke="#8c8c8c" stroke-width="1.700"/></svg>
        <svg class="win" viewBox="0 0 20 20"><rect x=".9" y="4.600" width="14.600" height="14.600" rx="2" fill="none" stroke="#8c8c8c" stroke-width="1.700"/><path d="M5 1h10c3 0 4.200 1.300 4.200 4.200V15" fill="none" stroke="#8c8c8c" stroke-width="1.700"/></svg>
        <svg class="win" viewBox="0 0 20 20"><path d="M.5.5l19 19M19.500.5l-19 19" stroke="#8c8c8c" stroke-width="1.600"/></svg>
      </div>
      <div class="menu row">${MENU.map(([t, w]) => html`<qg-text text=${t} .w=${w}></qg-text>`)}</div>
      ${BARS.map((b, i) => html`<div class="bar row ${i === 2 ? "last" : ""}">${b.split(" ").map((t) => this.tool(t))}</div>`)}
      <div class="work">
        <div class="dock">
          ${this.head("Browser", 105)}
          <div class="tools row">${["addlayer", "refresh", "funnel", "collapse", "info"].map((n) => icon(n))}</div>
          <div class="view b">
            <div class="items">${TREE.map(([ic, t, w, a]) => html`<div class="item row"><div class="exp">${a ? this.tri("r") : nothing}</div>${icon(ic, "pic")}<qg-text text=${t} .w=${w}></qg-text></div>`)}</div>
            <div class="sb"><div class="end">${this.tri("u")}</div><div class="thumb" style=${styleMap({ height: "38px" })}></div><div class="fill"></div><div class="end dn">${this.tri("d")}</div></div>
          </div>
          <div class="split"><svg viewBox="0 0 18 3">${[0, 3, 6, 9, 12, 15].map((x) => svg`<circle cx=${x + 1} cy="1.500" r=".8" fill="#aaa"/>`)}</svg></div>
          ${this.head("Layers", 82)}
          <div class="tools row">${["brush", "addgroup", "eye", "funneldrop", "epsilon"].map((n) => icon(n))}<div class="drop">${this.tri("d")}</div>${["expand", "collapse", "removelayer"].map((n) => icon(n))}</div>
          <div class="view l">
            <div class="items">${LAYERS.map((l) => this.layerRow(l))}
              <div class="band"><qg-text text="Band 1" .w=${88}></qg-text></div>
              <div class="ramp"><div class="col"></div><qg-text text="239.5156" .w=${113}></qg-text></div>
            </div>
            <div class="sb"><div class="end">${this.tri("u")}</div><div class="fill"></div><div class="thumb low" style=${styleMap({ height: "150px" })}></div><div class="end dn">${this.tri("d")}</div></div>
          </div>
        </div>
        <div class="canvas">
          <div class="msg row">
            <svg class="tick" viewBox="0 0 38 30"><path d="M1 3.500L11.500 13 37 1 9 28z" fill="#3ee03e" stroke="#1d7a1d" stroke-width="1.600"/></svg>
            <b><qg-text text="DXF export completed:" .w=${309}></qg-text></b>
            <qg-text text="Successfully exported DXF to" .w=${342}></qg-text>
            <qg-text class="link" text="GEOTA Fresh Project.dxf" .w=${293}></qg-text>
            <svg class="x" viewBox="0 0 42 42"><circle cx="21" cy="21" r="21" fill="#363b33"/><path d="M12 12l18 18M30 12L12 30" stroke="#fff" stroke-width="6" stroke-linecap="round"/></svg>
          </div>
          <svg class="map" viewBox="667 400 3172 1703">
            <polygon class="region" points=${OUTLINE}></polygon>
            ${poly(FOREST, "for")}${poly(INDUSTRY, "ind")}
            ${SEAMS.map(([s, p]) => svg`<polyline class="seam" points=${pts(s, p)}></polyline>`)}
            ${CUTS.map(([s, p]) => svg`<polyline class="cutl" points=${pts(s, p)}></polyline>`)}
            <polygon class="hot" points=${HIGHLIGHT}></polygon>
            <path d="M2037 1356l6-9" stroke="#c9785a" stroke-width="1.500"></path>
          </svg>
        </div>
      </div>
      <div class="status row">
        <div class="field locate"><svg viewBox="0 0 31 31"><circle cx="12" cy="12" r="10" fill="none" stroke="#808080" stroke-width="2.400"/><path d="M19 20l10.500 9" stroke="#808080" stroke-width="3"/></svg><qg-text text="Type to locate (Ctrl+K)" .w=${273}></qg-text></div>
        <qg-text text="Identifying done." .w=${201}></qg-text>
        <qg-text class="right" text="Coordinate" .w=${129}></qg-text>
        <div class="field coord"><qg-text text="130277,3165796" .w=${202}></qg-text></div>
        <svg class="mouse" viewBox="0 0 34 40"><path d="M5 5c3-6 9-4 11 1l3 11c2 5-2 8-6 6C7 20 2 12 5 5z" fill="#fff" stroke="#000" stroke-width="3"/><path d="M9 3l3 10 6 8M3 14c6 0 12-2 14-6" stroke="#000" stroke-width="3" fill="none"/><path d="M12 22c-6 6-2 15 6 15 8 1 12-6 11-18" fill="none" stroke="#000" stroke-width="3"/><circle cx="20" cy="28" r="4.500" fill="#fff" stroke="#000" stroke-width="3"/><path d="M25 13l2-3M29 5l2-3M1 22v4M24 6l1 2" stroke="#000" stroke-width="2.500"/></svg>
        <qg-text text="Scale" .w=${61}></qg-text>
        <div class="field scale"><qg-text text="1:308850" .w=${113}></qg-text><div class="pad">${this.tri("d")}</div></div>
        <svg class="lock" viewBox="0 0 30 38"><path d="M5 18V11C5-1 25-1 25 11v7" fill="none" stroke="#8a8a8a" stroke-width="3.500"/><rect x="1" y="17" width="28" height="20" rx="2" fill="#636363"/></svg>
        <qg-text text="Magnifier" .w=${109}></qg-text>
        <div class="field mag"><qg-text text="100%" .w=${68}></qg-text><div class="spin">${this.tri("u")}${this.tri("d")}</div></div>
        <qg-text text="Rotation" .w=${98}></qg-text>
        <div class="field rot"><qg-text text="0.0 °" .w=${57}></qg-text><div class="spin">${this.tri("u")}${this.tri("d")}</div></div>
        <div class="cb"><svg viewBox="0 0 33 33">${this.check()}</svg></div>
        <qg-text class="ren" text="Render" .w=${83}></qg-text>
        <svg class="crs" viewBox="0 0 28 26"><ellipse cx="15" cy="11" rx="10.500" ry="10" fill="#d8d8d8" stroke="#666" stroke-width="1.600"/><path d="M4 8h22M4 14h22M15 1v20M10 2c-3 6-3 12 0 18M20 2c3 6 3 12 0 18" stroke="#666" stroke-width="1.300" fill="none"/><path d="M2 9c-2 8 4 14 14 13M10 25h12" stroke="#777" stroke-width="2" fill="none"/></svg>
        <qg-text text="EPSG:32644" .w=${146}></qg-text>
        <svg class="chat" viewBox="0 0 28 27"><path d="M14 1c7.500 0 13 4.300 13 10.300 0 4.500-3 7.600-7 9.300.3 2.400 1.500 4 3.500 5.400-4 0-7-1.500-9-4.500C7 21.500 1 17.500 1 11.300 1 5.300 6.500 1 14 1z" fill="#555"/><g fill="#fff"><circle cx="8.500" cy="11" r="1.800"/><circle cx="14" cy="11" r="1.800"/><circle cx="19.500" cy="11" r="1.800"/></g></svg>
      </div>`;
  }
}
